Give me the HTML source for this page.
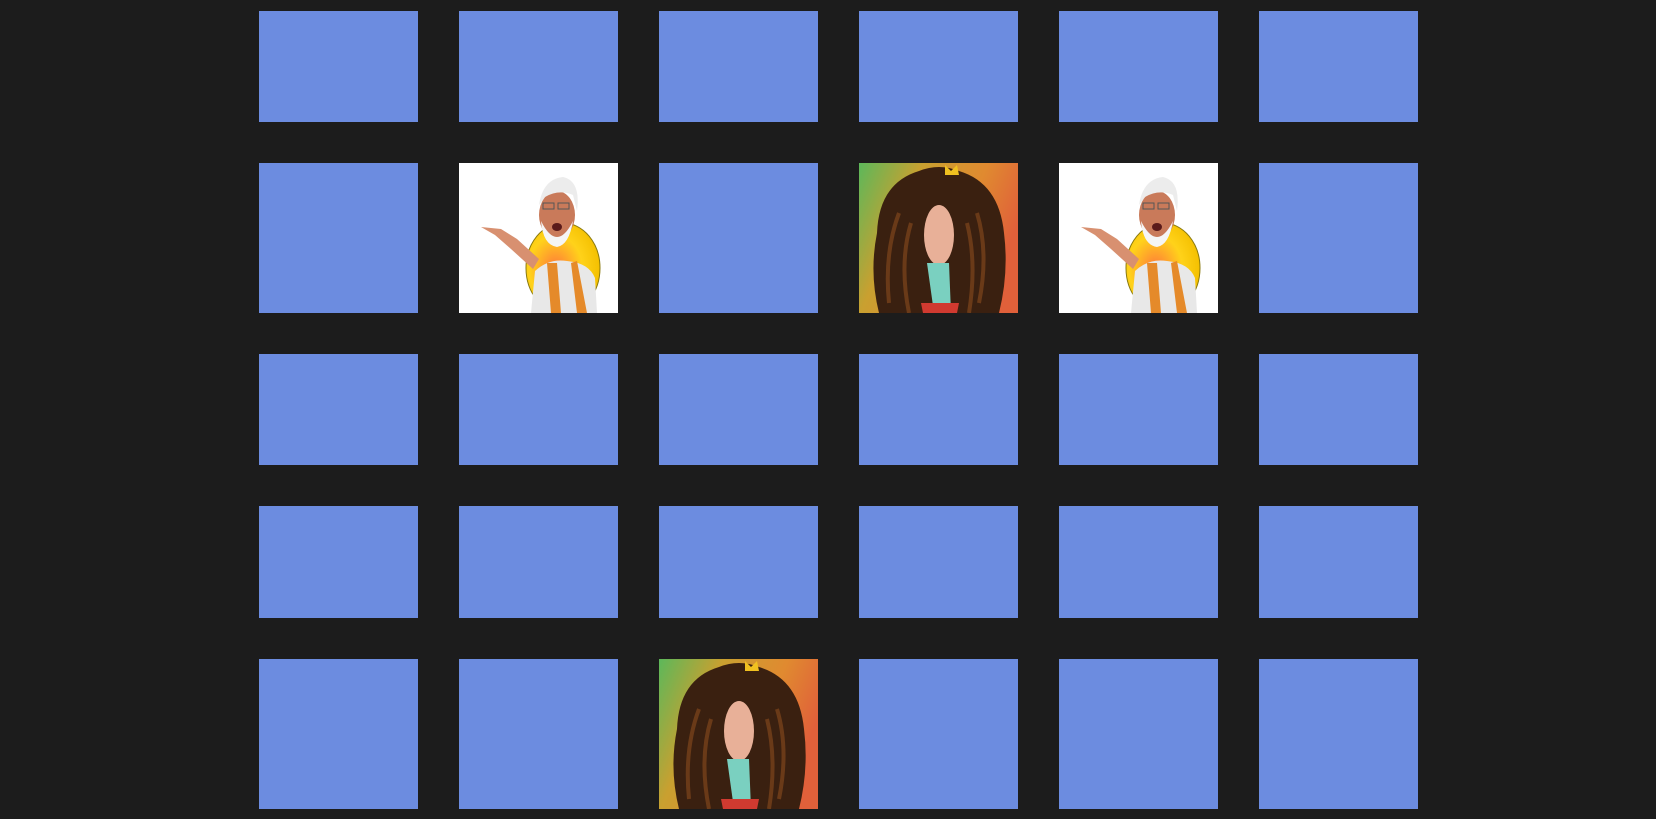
<!DOCTYPE html>
<html><head><style>
html,body{margin:0;padding:0;background:#1c1c1c;width:1656px;height:819px;overflow:hidden}
.c{position:absolute;width:159px;background:#6c8ce0}
svg{display:block}
</style></head><body>
<div id="g"></div>
<script>
var xs=[259,459,659,859,1059,1259];
var rows=[[11,111],[163,150],[354,111],[506,112],[659,150]];
var special={"1,1":"m","1,3":"k","1,4":"m","4,2":"k"};
var modi='<svg width="159" height="150" viewBox="0 0 159 150"><rect width="159" height="150" fill="#fff"/><defs><radialGradient id="ry" cx="0.4" cy="0.5" r="0.6"><stop offset="0" stop-color="#ff7a3a"/><stop offset="0.6" stop-color="#ffd21a"/><stop offset="1" stop-color="#f4c000"/></radialGradient></defs><ellipse cx="104" cy="105" rx="37" ry="45" fill="url(#ry)" stroke="#8a7a10"/><path d="M72 150 L76 108 Q90 95 108 98 Q130 100 136 115 L138 150Z" fill="#e8e8e8"/><path d="M88 100 L92 150 L102 150 L98 100Z M112 100 L118 150 L128 150 L118 98Z" fill="#e58a2a"/><path d="M22 64 L42 66 L58 76 L80 96 L74 106 L52 86 L36 72 Z" fill="#d89070"/><ellipse cx="98" cy="52" rx="18" ry="24" fill="#c97a5a"/><path d="M80 42 Q84 16 104 14 Q122 18 118 48 L114 32 Q100 26 86 34Z" fill="#ececec"/><path d="M82 58 Q98 90 114 58 Q110 82 98 84 Q84 82 82 58Z" fill="#f5f5f5"/><ellipse cx="98" cy="64" rx="5" ry="4" fill="#5a1a1a"/><rect x="84" y="40" width="11" height="6" fill="none" stroke="#555"/><rect x="99" y="40" width="11" height="6" fill="none" stroke="#555"/></svg>';
var kang='<svg width="159" height="150" viewBox="0 0 159 150"><defs><linearGradient id="kg" x1="0" y1="0" x2="1" y2="0.4"><stop offset="0" stop-color="#5cb85a"/><stop offset="0.35" stop-color="#c9a030"/><stop offset="0.7" stop-color="#e08a30"/><stop offset="1" stop-color="#e0603a"/></linearGradient></defs><rect width="159" height="150" fill="url(#kg)"/><path d="M20 150 Q10 110 18 70 Q20 20 60 8 Q80 0 100 8 Q140 20 145 70 Q150 110 140 150Z" fill="#3a2010"/><path d="M30 140 Q25 90 40 50 M120 140 Q130 90 118 50 M50 150 Q40 100 52 60 M110 150 Q118 100 108 60" stroke="#6a3a18" stroke-width="4" fill="none"/><ellipse cx="80" cy="72" rx="15" ry="30" fill="#e8b098"/><path d="M68 100 L75 150 L92 150 L90 100Z" fill="#7ad0c0"/><path d="M62 140 L100 140 L98 150 L64 150Z" fill="#d03a30"/><path d="M86 2 L92 8 L98 2 L100 12 L86 12Z" fill="#f0c020"/></svg>';
var h='';
rows.forEach(function(r,ri){xs.forEach(function(x,ci){var s=special[ri+','+ci];h+='<div class="c" style="left:'+x+'px;top:'+r[0]+'px;height:'+r[1]+'px">'+(s=='m'?modi:s=='k'?kang:'')+'</div>';});});
document.getElementById('g').innerHTML=h;
</script>
</body></html>
